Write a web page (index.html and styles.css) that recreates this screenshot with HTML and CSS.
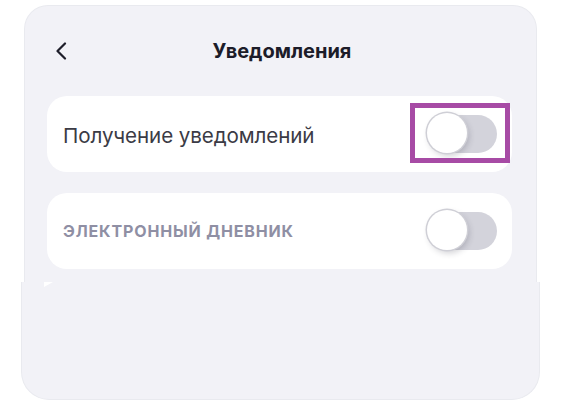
FILE: index.html
```html
<!DOCTYPE html>
<html lang="ru">
<head>
<meta charset="utf-8">
<link rel="stylesheet" href="styles.css">
</head>
<body>
<div class="frame">
  <section class="screen">
    <header class="topbar">
      <svg class="back" width="12" height="18" viewBox="0 0 12 18" aria-hidden="true">
        <path d="M10 1.5 L2.5 9 L10 16.5" fill="none" stroke="#1e1e2a" stroke-width="2.2" stroke-linecap="round" stroke-linejoin="round"/>
      </svg>
      <h1 class="title">Уведомления</h1>
    </header>
    <div class="list">
      <div class="row">
        <span class="label">Получение уведомлений</span>
        <span class="switch"><span class="thumb"></span></span>
        <span class="highlight"></span>
      </div>
      <div class="row">
        <span class="label label-caps">Электронный дневник</span>
        <span class="switch"><span class="thumb"></span></span>
      </div>
    </div>
  </section>
  <section class="lower">
    <span class="chip"></span>
  </section>
</div>
</body>
</html>
```

FILE: styles.css
```css
html, body {
  margin: 0;
  padding: 0;
  background: #ffffff;
}
body {
  font-family: Inter, "Noto Sans", "DejaVu Sans", sans-serif;
  width: 561px;
  height: 403px;
  overflow: hidden;
}
.frame {
  padding-top: 5px;
  display: flex;
  flex-direction: column;
}
.screen {
  box-sizing: border-box;
  margin-left: 24px;
  width: 513px;
  height: 277px;
  background: #f2f2f7;
  border: 1px solid #e9eaef;
  border-bottom: none;
  border-radius: 24px 24px 0 0;
  padding: 0 24px 0 22px;
}
.topbar {
  position: relative;
  height: 90px;
  display: flex;
  align-items: center;
  justify-content: center;
}
.back {
  position: absolute;
  left: 8px;
  top: 36px;
}
.title {
  margin: -1px 0 0 5px;
  font-size: 20px;
  font-weight: 700;
  color: #1c1c29;
  letter-spacing: 0;
}
.list {
  display: flex;
  flex-direction: column;
  gap: 21px;
}
.row {
  position: relative;
  height: 76px;
  background: #ffffff;
  border-radius: 20px;
  display: flex;
  align-items: center;
  justify-content: space-between;
  padding: 0 15px 0 16px;
}
.label {
  font-size: 20.6px;
  color: #3b3b45;
  letter-spacing: -0.1px;
  margin-top: 2px;
}
.label-caps {
  text-transform: uppercase;
  font-size: 16px;
  font-weight: 700;
  color: #8f8fa4;
  letter-spacing: 0.85px;
  margin-top: 0;
}
.switch {
  position: relative;
  width: 70px;
  height: 38px;
  border-radius: 19px;
  background: #d3d3db;
  display: flex;
  align-items: center;
}
.thumb {
  position: absolute;
  left: 0;
  top: -2px;
  width: 40px;
  height: 40px;
  border-radius: 50%;
  background: #ffffff;
  box-shadow: 0 0 0 1.5px #cfcfd6, 2px 3px 6px rgba(40, 40, 60, 0.22);
}
.highlight {
  position: absolute;
  left: 363px;
  top: 7px;
  width: 100px;
  height: 60px;
  box-sizing: border-box;
  border: 5px solid #a74ba5;
}
.lower {
  position: relative;
  box-sizing: border-box;
  margin-left: 21px;
  width: 519px;
  height: 118px;
  background: #f2f2f7;
  border: 1px solid #e9eaef;
  border-top: none;
  border-radius: 0 0 28px 28px;
}
.chip {
  position: absolute;
  left: 22px;
  top: 0;
  width: 9px;
  height: 5px;
  background: #ffffff;
  clip-path: polygon(0 0, 100% 0, 0 100%);
}
```
